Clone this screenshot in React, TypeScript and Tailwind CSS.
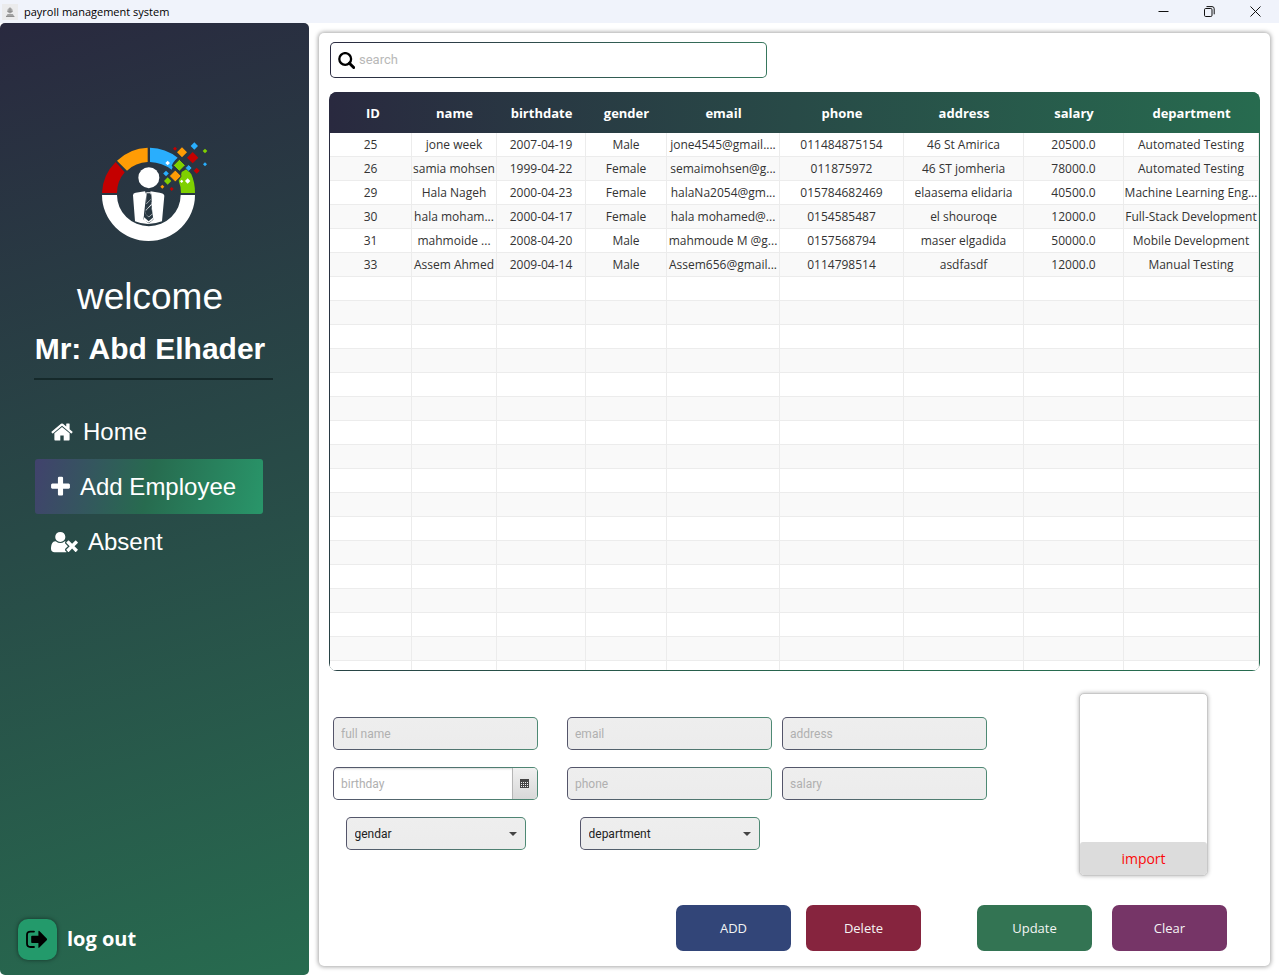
import React from "react";

type Employee = {
  id: string;
  name: string;
  birthdate: string;
  gender: string;
  email: string;
  phone: string;
  address: string;
  salary: string;
  department: string;
};

const columns: { key: keyof Employee; label: string; width: string }[] = [
  { key: "id", label: "ID", width: "w-[82px] pl-1" },
  { key: "name", label: "name", width: "w-[85px]" },
  { key: "birthdate", label: "birthdate", width: "w-[89px]" },
  { key: "gender", label: "gender", width: "w-[81px]" },
  { key: "email", label: "email", width: "w-[113px]" },
  { key: "phone", label: "phone", width: "w-[124px]" },
  { key: "address", label: "address", width: "w-[120px]" },
  { key: "salary", label: "salary", width: "w-[100px]" },
  { key: "department", label: "department", width: "w-[135px]" },
];

const employees: Employee[] = [
  { id: "25", name: "jone week", birthdate: "2007-04-19", gender: "Male", email: "jone4545@gmail....", phone: "011484875154", address: "46 St Amirica", salary: "20500.0", department: "Automated Testing" },
  { id: "26", name: "samia mohsen", birthdate: "1999-04-22", gender: "Female", email: "semaimohsen@g...", phone: "011875972", address: "46 ST jomheria", salary: "78000.0", department: "Automated Testing" },
  { id: "29", name: "Hala Nageh", birthdate: "2000-04-23", gender: "Female", email: "halaNa2054@gm...", phone: "015784682469", address: "elaasema elidaria", salary: "40500.0", department: "Machine Learning Eng..." },
  { id: "30", name: "hala moham...", birthdate: "2000-04-17", gender: "Female", email: "hala mohamed@...", phone: "0154585487", address: "el shouroqe", salary: "12000.0", department: "Full-Stack Development" },
  { id: "31", name: "mahmoide ...", birthdate: "2008-04-20", gender: "Male", email: "mahmoude M @g...", phone: "0157568794", address: "maser elgadida", salary: "50000.0", department: "Mobile Development" },
  { id: "33", name: "Assem Ahmed", birthdate: "2009-04-14", gender: "Male", email: "Assem656@gmail...", phone: "0114798514", address: "asdfasdf", salary: "12000.0", department: "Manual Testing" },
];

const EMPTY_ROWS = 40;

const uiFont = "font-['Open_Sans','Noto_Sans',sans-serif]";
const arialFont = "font-['Liberation_Sans',Arial,sans-serif]";

const fieldBorder =
  "border border-transparent rounded-[5px] [background:linear-gradient(#eeeeee,#ececec)_padding-box,linear-gradient(99deg,#54546a,#4e8a74)_border-box]";

function TitleBar() {
  return (
    <header className="flex h-[23px] shrink-0 items-center bg-[#f0f3fb] pl-0.5 pr-[18px]">
      <svg width="16" height="16" viewBox="0 0 16 16" aria-hidden="true">
        <rect width="16" height="16" fill="#ebebec" />
        <circle cx="8" cy="6.5" r="2.6" fill="#a9a9a9" />
        <path d="M8 3.4v6M5.4 7.4h5.2" stroke="#8e8e8e" strokeWidth="1" />
        <path d="M4 12.4h8.4l-1.6-2.4H5.6z" fill="#a2a2a2" />
        <path d="M4 12.5h8.4" stroke="#8e8e8e" />
      </svg>
      <h1 className={`ml-1.5 text-[11px] leading-4 text-black ${uiFont}`}>payroll management system</h1>
      <div className="ml-auto flex items-center gap-[35px]">
        <button type="button" aria-label="Minimize">
          <svg width="11" height="11" viewBox="0 0 11 11" className="block">
            <path d="M0.5 5.5h10" stroke="#111" />
          </svg>
        </button>
        <button type="button" aria-label="Restore">
          <svg width="11" height="11" viewBox="0 0 11 11" className="block" fill="none" stroke="#111">
            <rect x="0.5" y="2.5" width="7.5" height="8" rx="1.2" />
            <path d="M2.5 0.6h5.5a2.2 2.2 0 0 1 2.2 2.2v5.5" />
          </svg>
        </button>
        <button type="button" aria-label="Close">
          <svg width="11" height="11" viewBox="0 0 11 11" className="block" stroke="#111">
            <path d="M0.5 0.5l10 10M10.5 0.5l-10 10" />
          </svg>
        </button>
      </div>
    </header>
  );
}

function Logo() {
  return (
    <svg width="140" height="125" viewBox="0 0 420 375" aria-hidden="true" className="shrink-0">
      <path d="M51 195h45a95 93 0 0 0 191 0h43a139.5 138 0 0 1-279 0z" fill="#fff" />
      <path d="M51 189a139 138 0 0 1 41-93l27 31a95 95 0 0 0-23 62z" fill="#c40000" />
      <path d="M96 92a139 138 0 0 1 92-39v43a95 95 0 0 0-62 26z" fill="#ff9c05" />
      <path d="M195 53a139 138 0 0 1 83 30l-7 7-7 9-4 8 3 4-3 8q-28-21-65-23z" fill="#29aefd" />
      <path d="M290 126l14-8 5 3 10 12q11 24 11 56h-42q0-20-7-37l6-10z" fill="#7fd000" />
      <circle cx="191.500" cy="143" r="31.500" fill="#fff" />
      <path d="M144 196q0-7 8-8l28-4 4 10-9 74 16 12 14-11-5-40v-34l-4-11 28 4q13 2 14 9l-7 77q-21 8-42 8t-39-8z" fill="#fff" />
      <path d="M184 187h14l2 12-1 8-15 16 1-18zM200 215v10l-18 17 2-11zM200 232l3 20-12 10-10-11 2-8z" fill="#fff" />
      <path d="M186 190h10l3 8v8l-14 14-2 0 2-17zM199 214v8l-17 19 2-12zM199 229l3 22-11 9-10-8 1-8z" fill="#273640" />
      <path d="M177 188l-3 71 17 15 14-12-2 8-12 8-15-7z" fill="#fff" />
      <path d="M328 37l11 11-11 11-11-11z" fill="#29aefd" />
      <path d="M291 52l15 15-15 15-15-15z" fill="#ff9c05" />
      <path d="M323 66l17 17-17 17-17-17z" fill="#c40000" />
      <path d="M283 88l18 18-18 18-18-18z" fill="#7fd000" stroke="#273640" strokeWidth="3" />
      <path d="M311 104l10 10-10 10-10-10z" fill="#29aefd" stroke="#273640" strokeWidth="2" />
      <path d="M271 120l18 18-18 18-18-18z" fill="#ff9c05" stroke="#273640" strokeWidth="3" />
      <path d="M243 122l8.500 8.500-8.500 8.500-8.500-8.500z" fill="#29aefd" />
      <path d="M248 142l11 11-11 11-11-11z" fill="#7fd000" />
      <path d="M335 113l9 9-9 9-9-9z" fill="#c40000" />
      <path d="M270 50l6 6-6 6-6-6z" fill="#c40000" />
      <path d="M360 56l7 7-7 7-7-7z" fill="#7fd000" />
      <path d="M360 97l6 6-6 6-6-6z" fill="#29aefd" />
      <path d="M232 164l6 6-6 6-6-6z" fill="#ff9c05" />
      <path d="M260 171l6 6-6 6-6-6z" fill="#c40000" />
      <path d="M248 92l7 7-7 7-7-7zM308 145l8 8-8 8-8-8zM290 149l5 5-5 5-5-5z" fill="#fff" />
    </svg>
  );
}

const HomeIcon = () => (
  <svg width="22" height="24" viewBox="64 0 1664 1792" fill="currentColor" aria-hidden="true">
    <path d="M1472 992v480q0 26-19 45t-45 19h-384v-384h-256v384h-384q-26 0-45-19t-19-45v-480q0-1 .5-3t.5-3l575-474 575 474q1 2 1 6zm223-69l-62 74q-8 9-21 11h-3q-13 0-21-7l-692-577-692 577q-12 8-24 7-13-2-21-11l-62-74q-8-10-7-23.500t11-21.500l719-599q32-26 76-26t76 26l244 204v-195q0-14 9-23t23-9h192q14 0 23 9t9 23v408l219 182q10 8 11 21.500t-7 23.500z" />
  </svg>
);

const PlusIcon = () => (
  <svg width="19" height="24" viewBox="192 0 1408 1792" fill="currentColor" aria-hidden="true">
    <path d="M1600 736v192q0 40-28 68t-68 28h-416v416q0 40-28 68t-68 28h-192q-40 0-68-28t-28-68v-416h-416q-40 0-68-28t-28-68v-192q0-40 28-68t68-28h416v-416q0-40 28-68t68-28h192q40 0 68 28t28 68v416h416q40 0 68 28t28 68z" />
  </svg>
);

const UserTimesIcon = () => (
  <svg width="27" height="24" viewBox="0 0 2048 1792" fill="currentColor" aria-hidden="true">
    <path d="M704 896q-159 0-271.500-112.500t-112.500-271.500 112.500-271.500 271.500-112.500 271.500 112.500 112.500 271.500-112.500 271.500-271.500 112.500zm1077 320l249 249q9 9 9 23 0 13-9 22l-136 136q-9 9-22 9-14 0-23-9l-249-249-249 249q-9 9-23 9-13 0-22-9l-136-136q-9-9-9-22 0-14 9-23l249-249-249-249q-9-9-9-23 0-13 9-22l136-136q9-9 22-9 14 0 23 9l249 249 249-249q9-9 23-9 13 0 22 9l136 136q9 9 9 22 0 14-9 23zm-498 0l-181 181q-37 37-37 91 0 53 37 90l83 83q-21 3-44 3h-874q-121 0-194-69t-73-190q0-53 3.500-103.500t14-109 26.500-108.500 43-97.500 62-81 85.500-53.500 111.500-20q19 0 39 17 154 122 319 122t319-122q20-17 39-17 28 0 57 6-28 27-41 50t-13 56q0 54 37 91z" />
  </svg>
);

function Sidebar() {
  const item = "flex h-[55px] w-full items-center gap-2.5 rounded-[3px] px-4 text-left text-[24px] leading-7";
  return (
    <aside className="flex w-[309px] shrink-0 flex-col rounded-[5px] bg-[linear-gradient(162deg,#29293f,#276b4f)] text-white">
      <div className={`flex flex-col items-center pr-[9px] pt-[107px] ${arialFont}`}>
        <div className="pl-2.5">
          <Logo />
        </div>
        <p className="mt-[21px] text-[37px] leading-[42px]">welcome</p>
        <p className="mt-[13px] text-[30px] font-bold leading-9">Mr: Abd Elhader</p>
      </div>
      <div className="ml-[34px] mr-9 mt-[11px] h-0.5 bg-[#15292a]" />
      <nav className={`ml-[35px] mr-[46px] mt-6 ${arialFont}`}>
        <button type="button" className={item}>
          <HomeIcon />
          Home
        </button>
        <button
          type="button"
          aria-current="page"
          className={`${item} bg-[linear-gradient(104deg,#41426d,#276b4f_50%,#29966a)]`}
        >
          <PlusIcon />
          Add Employee
        </button>
        <button type="button" className={item}>
          <UserTimesIcon />
          Absent
        </button>
      </nav>
      <div className="mb-[15px] ml-[18px] mt-auto flex items-center gap-2.5">
        <button
          type="button"
          aria-labelledby="logout-label"
          className="flex h-[41px] w-[39px] items-center justify-center rounded-[10px] bg-[#239a6b] pr-0.5 shadow-[0_0_4px_rgba(0,0,0,0.5)]"
        >
          <svg width="21" height="19" viewBox="0 0 21 19" aria-hidden="true">
            <path d="M8 1.600H4.500Q1 1.600 1 5v8.500Q1 17 4.500 17H8" fill="none" stroke="#000" strokeWidth="1.800" strokeLinecap="round" />
            <path d="M6 5.800h6.400V1.500q0-1.200 1-.4l7.300 7.400q.8.900 0 1.700l-7.300 7.400q-1 .8-1-.4v-4.100H6q-.8 0-.8-.8V6.600q0-.8.8-.8z" fill="#000" />
          </svg>
        </button>
        <span id="logout-label" className={`pb-0.5 text-[20px] font-bold leading-6 ${uiFont}`}>log out</span>
      </div>
    </aside>
  );
}

function EmployeeTable() {
  const cell = "h-6 overflow-hidden whitespace-nowrap border-b border-r border-[#ececec] p-0 text-center";
  return (
    <div className="mt-3.5 flex min-h-0 flex-1 basis-0 flex-col overflow-hidden rounded-[8px] bg-[linear-gradient(122deg,#29293f,#276b4f_70%)] p-px pt-0">
      <div className="min-h-0 flex-1 overflow-hidden">
        <table className={`w-full table-fixed border-separate border-spacing-0 ${uiFont}`}>
          <thead>
            <tr className="bg-[linear-gradient(92deg,#29293f,#276b4f)]">
              {columns.map((c) => (
                <th key={c.key} scope="col" className={`h-[41px] py-0 pr-0 text-center text-[13px] font-bold leading-4 text-white ${c.width}`}>
                  {c.label}
                </th>
              ))}
            </tr>
          </thead>
          <tbody className="text-[12px] leading-4 text-[#333]">
            {employees.map((e) => (
              <tr key={e.id} className="bg-white even:bg-[#f9f9f9]">
                {columns.map((c) => (
                  <td key={c.key} className={cell}>
                    {e[c.key]}
                  </td>
                ))}
              </tr>
            ))}
            {Array.from({ length: EMPTY_ROWS }, (_, i) => (
              <tr key={`empty-${i}`} className="bg-white even:bg-[#f9f9f9]">
                {columns.map((c) => (
                  <td key={c.key} className={cell} />
                ))}
              </tr>
            ))}
          </tbody>
        </table>
      </div>
    </div>
  );
}

function TextField({ label }: { label: string }) {
  return (
    <input
      type="text"
      aria-label={label}
      placeholder={label}
      className={`h-[33px] w-full px-[7px] text-[12px] leading-4 text-[#333] placeholder:text-[#b0b0b0] ${fieldBorder}`}
    />
  );
}

function DateField() {
  return (
    <div className="flex h-[33px] w-full overflow-hidden rounded-[5px] border border-transparent [background:linear-gradient(#ffffff,#ffffff)_padding-box,linear-gradient(99deg,#54546a,#4e8a74)_border-box]">
      <input
        type="text"
        aria-label="birthday"
        placeholder="birthday"
        className="min-w-0 flex-1 px-[7px] text-[12px] leading-4 text-[#333] shadow-[inset_0_2px_2px_-1px_rgba(0,0,0,0.15)] placeholder:text-[#b0b0b0]"
      />
      <button
        type="button"
        aria-label="Open calendar"
        className="flex w-[25px] items-center justify-center border-l border-[#b5b5b5] bg-linear-to-b from-[#f0f0f0] to-[#d8d8d8] pr-0.5"
      >
        <svg width="9" height="9" viewBox="0 0 9 9" aria-hidden="true" shapeRendering="crispEdges">
          <rect width="9" height="9" fill="#444" />
          <path d="M1 3.500h7M1 5.500h7M1 7.500h7" stroke="#eee" strokeDasharray="1 1" />
        </svg>
      </button>
    </div>
  );
}

function SelectField({ label }: { label: string }) {
  return (
    <div className="relative w-[180px] self-center">
      <select
        aria-label={label}
        defaultValue=""
        className={`block h-[33px] w-full appearance-none pl-2 pr-6 text-[12px] leading-4 text-[#222] ${fieldBorder}`}
      >
        <option value="">{label}</option>
      </select>
      <svg width="8" height="4" viewBox="0 0 8 4" aria-hidden="true" className="pointer-events-none absolute right-[9px] top-[15px]">
        <path d="M0 0h8L4 4z" fill="#444" />
      </svg>
    </div>
  );
}

function EmployeeForm() {
  const action = "h-[46px] w-[115px] rounded-[7px] text-[13px] leading-5 text-[#f4f4f4]";
  return (
    <form className={uiFont} onSubmit={(e) => e.preventDefault()}>
      <div className="mt-[22px] flex items-start justify-between pl-1 pr-[52px]">
        <div className="flex pt-6 font-['Roboto','Noto_Sans',sans-serif]">
          <div className="mr-[29px] flex w-[205px] flex-col gap-[17px]">
            <TextField label="full name" />
            <DateField />
            <SelectField label="gendar" />
          </div>
          <div className="mr-2.5 flex w-[205px] flex-col gap-[17px]">
            <TextField label="email" />
            <TextField label="phone" />
            <SelectField label="department" />
          </div>
          <div className="flex w-[205px] flex-col gap-[17px]">
            <TextField label="address" />
            <TextField label="salary" />
          </div>
        </div>
        <div className="flex h-[183px] w-[129px] flex-col overflow-hidden rounded-[5px] border border-[#c8c8c8] bg-white shadow-[0_0_4px_rgba(0,0,0,0.3)]">
          <div className="flex-1" />
          <button type="button" className="h-[33px] rounded-t-[3px] bg-[#dcdcdc] text-[14px] leading-5 text-[#fb0a0a]">
            import
          </button>
        </div>
      </div>
      <div className="mt-[29px] flex justify-end pr-[33px]">
        <button type="button" className={`${action} mr-[15px] bg-[#324578]`}>ADD</button>
        <button type="button" className={`${action} mr-14 bg-[#86243e]`}>Delete</button>
        <button type="button" className={`${action} mr-5 bg-[#337453]`}>Update</button>
        <button type="button" className={`${action} bg-[#763567]`}>Clear</button>
      </div>
    </form>
  );
}

export default function App() {
  return (
    <div className="flex h-screen min-h-[640px] flex-col bg-white">
      <TitleBar />
      <div className="flex min-h-0 flex-1">
        <Sidebar />
        <main className="mb-[9px] ml-2.5 mr-[9px] mt-2.5 flex min-w-0 flex-1 flex-col rounded-[5px] bg-white px-2.5 pb-[15px] pt-[9px] shadow-[0_0_4px_1px_rgba(0,0,0,0.35)]">
          <label className="ml-px flex h-9 w-[437px] max-w-full items-center gap-1 rounded-[5px] border border-transparent pl-[7px] pr-2 [background:linear-gradient(#ffffff,#ffffff)_padding-box,linear-gradient(95deg,#29293f,#37775d)_border-box]">
            <svg width="17" height="17" viewBox="0 0 17 17" aria-hidden="true" className="shrink-0" fill="none" stroke="#000">
              <circle cx="7.200" cy="7" r="5.900" strokeWidth="2.300" />
              <path d="M11.400 11.200l4.300 4.300" strokeWidth="3" strokeLinecap="round" />
            </svg>
            <input
              type="search"
              aria-label="search"
              placeholder="search"
              className="min-w-0 flex-1 text-[13px] leading-4 text-[#333] outline-none placeholder:text-[#b8b8b8] font-['Roboto','Noto_Sans',sans-serif]"
            />
          </label>
          <EmployeeTable />
          <EmployeeForm />
        </main>
      </div>
    </div>
  );
}
